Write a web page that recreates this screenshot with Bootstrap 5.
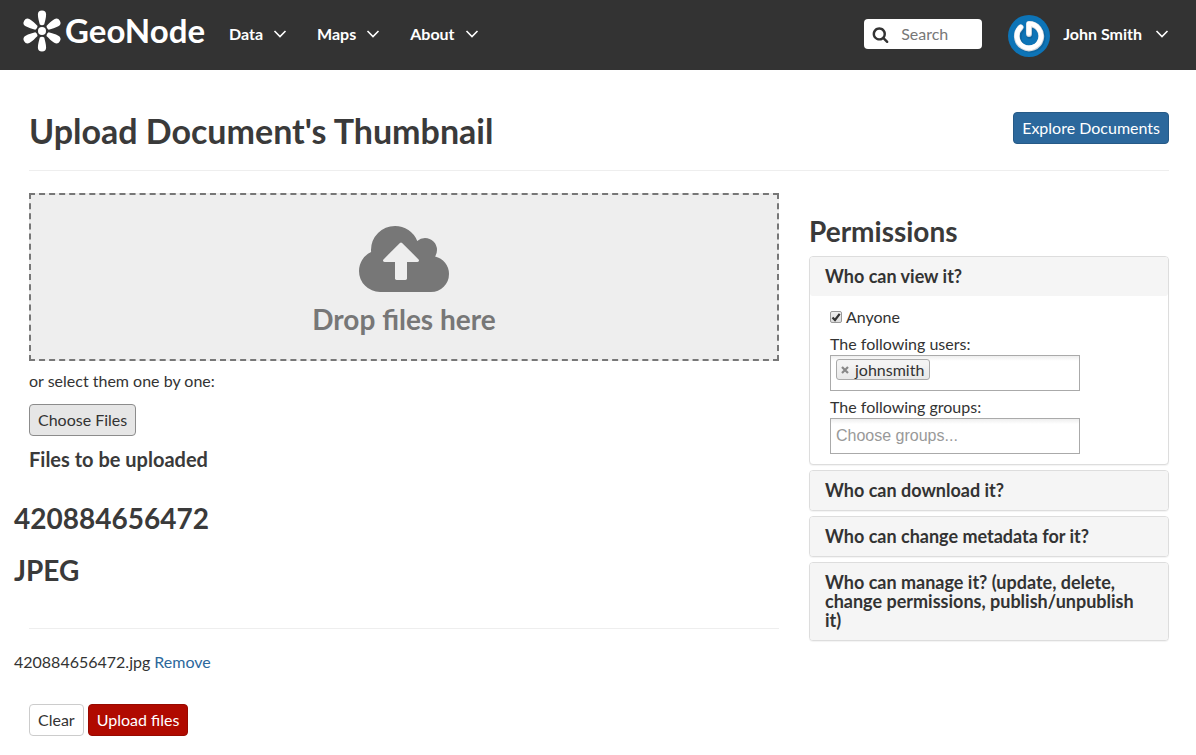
<!DOCTYPE html>
<html lang="en">
<head>
<meta charset="utf-8">
<meta name="viewport" content="width=device-width, initial-scale=1">
<title>Upload Document's Thumbnail - GeoNode</title>
<link href="https://cdn.jsdelivr.net/npm/bootstrap@5.3.0/dist/css/bootstrap.min.css" rel="stylesheet">
<style>
  body { font-family: Lato, sans-serif; font-size: 16px; line-height: 22px; color: #333; }
  h1, h2, h3, h4 { font-weight: 700; color: #3a3a3a; margin: 0; }
  hr { margin: 0; border-top: 1px solid #eee; opacity: 1; }
  a { color: #2c689c; }

  .site-nav { background: #333; min-height: 70px; padding: 0 27px 2px 22px; }
  .site-nav .nav-link, .site-nav .navbar-nav .nav-link { color: #fff; font-weight: 700; padding: 0; display: flex; align-items: center; gap: 10px; }
  .site-nav .user-link { gap: 13px; }
  .site-menu { gap: 30px; margin-left: 23px; }
  .search-box { width: 118px; height: 30px; background: #fff; border-radius: 4px; padding: 0 8px; gap: 12px; margin-right: 26px; }
  .search-box input { border: 0; padding: 0; background: none; font-size: 16px; outline: 0; color: #333; min-width: 0; flex: 1; }
  .search-box input::placeholder { color: #777; opacity: 1; }

  .page-body { padding: 42px 27px 16px 29px; }
  .page-title { font-size: 34px; line-height: 38px; }
  .title-row { padding-bottom: 20px; margin-bottom: 22px; border-bottom: 1px solid #eee; }
  .columns { --bs-gutter-x: 30px; }
  .section-title { font-size: 28px; line-height: 30px; }

  .btn-flat { --bs-btn-padding-x: 8px; --bs-btn-padding-y: 4px; --bs-btn-font-size: 16px; --bs-btn-line-height: 22px; --bs-btn-border-radius: 4px; }
  .btn-explore { --bs-btn-color: #fff; --bs-btn-bg: #2c689c; --bs-btn-border-color: #265a87; --bs-btn-hover-color: #fff; --bs-btn-hover-bg: #204d74; }
  .btn-choose { --bs-btn-color: #333; --bs-btn-bg: #e6e6e6; --bs-btn-border-color: #8c8c8c; --bs-btn-hover-bg: #d4d4d4; }
  .btn-clear { --bs-btn-color: #333; --bs-btn-bg: #fff; --bs-btn-border-color: #ccc; --bs-btn-hover-bg: #e6e6e6; }
  .btn-upload { --bs-btn-color: #fff; --bs-btn-bg: #b00a00; --bs-btn-border-color: #970900; --bs-btn-hover-color: #fff; --bs-btn-hover-bg: #7d0700; }

  .drop-zone { background: #eee; border: 2px dashed #777; padding: 25px 0; }
  .drop-zone h3 { color: #777; }
  .select-hint { margin: 9px 0 12px; }
  .files-title { font-size: 20px; line-height: 24px; margin-top: 11px; }
  .file-list { margin-left: -15px; }
  .file-group { display: grid; gap: 22px; padding: 32px 0 43px; }
  .file-row { padding: 22px 0 31px; }

  .perm-title { margin: 23px 0 10px; }
  .perm-list { gap: 5px; }
  .perm-panel { --bs-card-border-color: #ddd; --bs-card-border-radius: 4px; --bs-card-inner-border-radius: 3px; box-shadow: 0 1px 1px rgba(0,0,0,.05); }
  .perm-panel .card-header { background: #f5f5f5; border: 0; padding: 10px 15px; border-radius: 3px; }
  .perm-panel h4 { font-size: 18px; line-height: 19px; }
  .perm-panel h4 button { all: unset; cursor: pointer; display: block; color: #333; }
  .perm-fields { padding: 10px 20px; }
  .field-name { margin-top: 5px; }
  .tick { appearance: none; width: 12px; height: 12px; margin: 0; border: 1px solid #999; border-radius: 2px; background: linear-gradient(#eee, #ddd); }
  .tick:checked { background: url("data:image/svg+xml,%3Csvg xmlns='http://www.w3.org/2000/svg' viewBox='0 0 10 10'%3E%3Cpath d='M1.5 5.5 4 8 8.7 1.8' fill='none' stroke='%23333' stroke-width='2.2'/%3E%3C/svg%3E") center/10px no-repeat, linear-gradient(#eee, #ddd); }
  .picker { width: 250px; max-width: 100%; height: 36px; border: 1px solid #aaa; background: linear-gradient(#eee 0, #fff 5px); padding: 0 5px; }
  .picker input { border: 0; background: none; padding: 0; outline: 0; min-width: 0; flex: 1; font-family: "Liberation Sans", sans-serif; font-size: 16px; color: #555; }
  .picker input::placeholder { color: #999; opacity: 1; }
  .picked { border: 1px solid #aaa; border-radius: 3px; background: linear-gradient(#f4f4f4 20%, #e8e8e8); height: 21px; line-height: 19px; padding: 0 5px 0 4px; margin-top: 3px; gap: 6px; }
  .picked button { all: unset; display: flex; cursor: pointer; }
</style>
</head>
<body>
<nav class="site-nav navbar navbar-expand d-flex flex-nowrap align-items-center" aria-label="Main">
  <a href="#" aria-label="GeoNode" class="d-flex mb-2">
    <svg width="184" height="46" viewBox="0 0 184 46" fill="#fff">
      <g transform="translate(20 24)">
        <circle r="4"/>
        <path id="petal" d="M-2.200-6.400C-3-10-4.100-13-4.100-16.500a4.100 4.100 0 0 1 8.200 0C4.100-13 3-10 2.200-6.400Q0-5.200-2.200-6.400z"/>
        <use href="#petal" transform="rotate(60)"/><use href="#petal" transform="rotate(120)"/><use href="#petal" transform="rotate(180)"/><use href="#petal" transform="rotate(240)"/><use href="#petal" transform="rotate(300)"/>
      </g>
      <text x="43" y="36" font-family="Lato, sans-serif" font-size="33" font-weight="700">GeoNode</text>
    </svg>
  </a>
  <ul class="site-menu navbar-nav me-auto">
    <li><a class="nav-link" href="#">Data <svg width="14" height="10" viewBox="0 0 14 10" fill="none" stroke="#fff" stroke-width="1.6"><path d="M1.500 2 7 7.500 12.500 2"/></svg></a></li>
    <li><a class="nav-link" href="#">Maps <svg width="14" height="10" viewBox="0 0 14 10" fill="none" stroke="#fff" stroke-width="1.6"><path d="M1.500 2 7 7.500 12.500 2"/></svg></a></li>
    <li><a class="nav-link" href="#">About <svg width="14" height="10" viewBox="0 0 14 10" fill="none" stroke="#fff" stroke-width="1.6"><path d="M1.500 2 7 7.500 12.500 2"/></svg></a></li>
  </ul>
  <form class="search-box d-flex align-items-center" role="search">
    <svg width="17" height="17" viewBox="0 0 1792 1792" fill="#333" class="flex-shrink-0"><path d="M1216 832q0-185-131.500-316.500t-316.500-131.500-316.500 131.500-131.500 316.500 131.500 316.500 316.500 131.500 316.500-131.500 131.500-316.500zm512 832q0 52-38 90t-90 38q-54 0-90-38l-343-342q-179 124-399 124-143 0-273.500-55.500t-225-150-150-225-55.500-273.500 55.500-273.500 150-225 225-150 273.500-55.500 273.500 55.500 225 150 150 225 55.500 273.500q0 220-124 399l343 343q37 37 37 90z"/></svg>
    <input type="search" placeholder="Search" aria-label="Search">
  </form>
  <a class="nav-link user-link" href="#">
    <svg class="mt-1" width="42" height="42" viewBox="0 0 42 42" fill="none" stroke-linecap="round" stroke-linejoin="round">
      <circle cx="21" cy="21" r="21" fill="#0d74b7"/>
      <path d="M21.500 20.500V10.500a12 12 0 1 1-8 4" stroke="#0a5488" stroke-opacity=".45" stroke-width="6.400"/>
      <path d="M21 19V9a12.200 12.200 0 1 1-8.300 3.300" stroke="#d3d8de" stroke-width="5.800"/>
      <path d="M20.800 18.500V8.800a12 12 0 1 1-8.200 3.400" stroke="#fff" stroke-width="4.600"/>
    </svg>
    <span>John Smith</span>
    <svg width="14" height="10" viewBox="0 0 14 10" fill="none" stroke="#fff" stroke-width="1.6"><path d="M1.500 2 7 7.500 12.500 2"/></svg>
  </a>
</nav>

<main class="page-body container-fluid">
  <div class="title-row d-flex justify-content-between align-items-start">
    <h1 class="page-title">Upload Document's Thumbnail</h1>
    <a href="#" class="btn btn-flat btn-explore">Explore Documents</a>
  </div>
  <div class="row columns">
    <div class="col-8">
      <section class="drop-zone text-center">
        <svg class="d-block mx-auto" width="90" height="84" viewBox="0 0 1920 1792" fill="#777"><path d="M1280 864q0-14-9-23l-352-352q-9-9-23-9t-23 9l-351 351q-10 12-10 24 0 14 9 23t23 9h224v352q0 13 9.500 22.500t22.500 9.500h192q13 0 22.500-9.500t9.500-22.500v-352h224q13 0 22.500-9.500t9.500-22.500zm640 288q0 159-112.500 271.500t-271.500 112.500h-1088q-185 0-316.500-131.500t-131.500-316.500q0-130 70-240t188-165q-2-30-2-43 0-212 150-362t362-150q156 0 285.500 87t188.500 231q71-62 166-62 106 0 181 75t75 181q0 76-41 138 130 31 213.500 135.500t83.500 238.500z"/></svg>
        <h3 class="section-title">Drop files here</h3>
      </section>
      <p class="select-hint">or select them one by one:</p>
      <button type="button" class="btn btn-flat btn-choose">Choose Files</button>
      <h4 class="files-title">Files to be uploaded</h4>
      <div class="file-list file-group">
        <h3 class="section-title">420884656472</h3>
        <h3 class="section-title">JPEG</h3>
      </div>
      <hr>
      <div class="file-list file-row">420884656472.jpg <a href="#" class="text-decoration-none">Remove</a></div>
      <div class="d-flex gap-1">
        <button type="button" class="btn btn-flat btn-clear">Clear</button>
        <button type="button" class="btn btn-flat btn-upload">Upload files</button>
      </div>
    </div>
    <aside class="col-4">
      <h3 class="section-title perm-title">Permissions</h3>
      <div class="d-grid perm-list">
        <section class="card perm-panel">
          <div class="card-header"><h4><button type="button" aria-expanded="true">Who can view it?</button></h4></div>
          <div class="perm-fields">
            <div class="d-flex align-items-center gap-1"><input class="tick" type="checkbox" id="anyone" checked><label for="anyone">Anyone</label></div>
            <label class="d-block field-name" for="users">The following users:</label>
            <div class="picker d-flex align-items-start">
              <span class="picked d-flex align-items-center"><button type="button" aria-label="Remove johnsmith"><svg width="8" height="8" viewBox="0 0 8 8" stroke="#888" stroke-width="2.200"><path d="M1 1 7 7M7 1 1 7"/></svg></button>johnsmith</span>
              <input id="users" type="text">
            </div>
            <label class="d-block field-name" for="groups">The following groups:</label>
            <div class="picker d-flex align-items-center"><input id="groups" type="text" placeholder="Choose groups..."></div>
          </div>
        </section>
        <section class="card perm-panel"><div class="card-header"><h4><button type="button" aria-expanded="false">Who can download it?</button></h4></div></section>
        <section class="card perm-panel"><div class="card-header"><h4><button type="button" aria-expanded="false">Who can change metadata for it?</button></h4></div></section>
        <section class="card perm-panel"><div class="card-header"><h4><button type="button" aria-expanded="false">Who can manage it? (update, delete, change permissions, publish/unpublish it)</button></h4></div></section>
      </div>
    </aside>
  </div>
</main>
<script src="https://cdn.jsdelivr.net/npm/bootstrap@5.3.0/dist/js/bootstrap.bundle.min.js"></script>
</body>
</html>
